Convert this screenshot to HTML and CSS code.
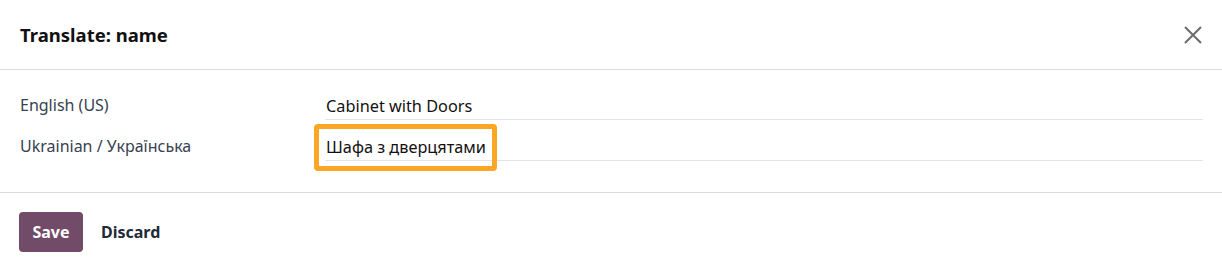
FILE: index.html
```html
<!DOCTYPE html>
<html>
  <head>
    <meta charset="utf-8">
    <title>Translate: name</title>
    <link rel="stylesheet" href="styles.css">
  </head>
  <body>
    <div class="modal">
      <div class="modal-header">
        <h4 class="modal-title">Translate: name</h4>
        <button type="button" class="btn-close" aria-label="Close">
          <svg width="18" height="18" viewBox="0 0 18 18">
            <path d="M1 1 L17 17 M17 1 L1 17" stroke="#6b6b6b" stroke-width="2" fill="none"/>
          </svg>
        </button>
      </div>

      <div class="modal-body">
        <div class="lang-row">
          <label class="lang-label">English (US)</label>
          <div class="lang-field">
            <input type="text" class="lang-input" value="Cabinet with Doors">
          </div>
        </div>
        <div class="lang-row">
          <label class="lang-label">Ukrainian / Українська</label>
          <div class="lang-field">
            <input type="text" class="lang-input" value="Шафа з дверцятами">
            <div class="highlight"></div>
          </div>
        </div>
      </div>

      <div class="modal-footer">
        <button type="button" class="btn btn-primary">Save</button>
        <button type="button" class="btn btn-secondary">Discard</button>
      </div>
    </div>
  </body>
</html>
```

FILE: styles.css
```css
body {
  margin: 0;
  font-family: "Noto Sans", "Open Sans", sans-serif;
  font-size: 16px;
  color: #111827;
  background-color: #fff;
}
.modal {
  width: 1222px;
  height: 272px;
  display: flex;
  flex-direction: column;
}
.modal-header {
  height: 69px;
  padding: 0 19px 0 20px;
  display: flex;
  align-items: center;
  justify-content: space-between;
  border-bottom: 1px solid #dcdcdc;
}
.modal-title {
  margin: 0;
  font-size: 18.5px;
  font-weight: 700;
  color: #111;
}
.btn-close {
  border: none;
  background: none;
  padding: 0;
  width: 18px;
  height: 18px;
  margin-right: 1px;
  cursor: pointer;
}
.btn-close svg {
  display: block;
}
.modal-body {
  padding: 20px 19px 31px 20px;
  display: flex;
  flex-direction: column;
  gap: 11px;
}
.lang-row {
  display: grid;
  grid-template-columns: 305px 1fr;
}
.lang-label {
  padding-top: 4px;
  color: #374151;
  font-size: 16px;
}
.lang-field {
  position: relative;
}
.lang-input {
  box-sizing: border-box;
  width: 100%;
  height: 30px;
  padding: 3px 1px 0;
  border: none;
  border-bottom: 1px solid #e2e4e8;
  font-family: inherit;
  font-size: 16.3px;
  color: #111;
  background: transparent;
  outline: none;
}
.highlight {
  position: absolute;
  left: -11px;
  top: -7px;
  width: 183px;
  height: 47px;
  box-sizing: border-box;
  border: 5px solid #fba624;
  border-radius: 4px;
  pointer-events: none;
}
.modal-footer {
  flex: 1;
  padding: 19px 19px 0;
  display: flex;
  align-items: flex-start;
  gap: 4px;
  border-top: 1px solid #dcdcdc;
}
.btn {
  height: 40px;
  padding: 0 14px;
  border: none;
  border-radius: 4px;
  font-family: inherit;
  font-size: 16px;
  font-weight: 700;
  cursor: pointer;
}
.btn-primary {
  width: 64px;
  padding: 0;
  background-color: #714b67;
  color: #fff;
}
.btn-secondary {
  background: none;
  color: #1f2937;
}
```
